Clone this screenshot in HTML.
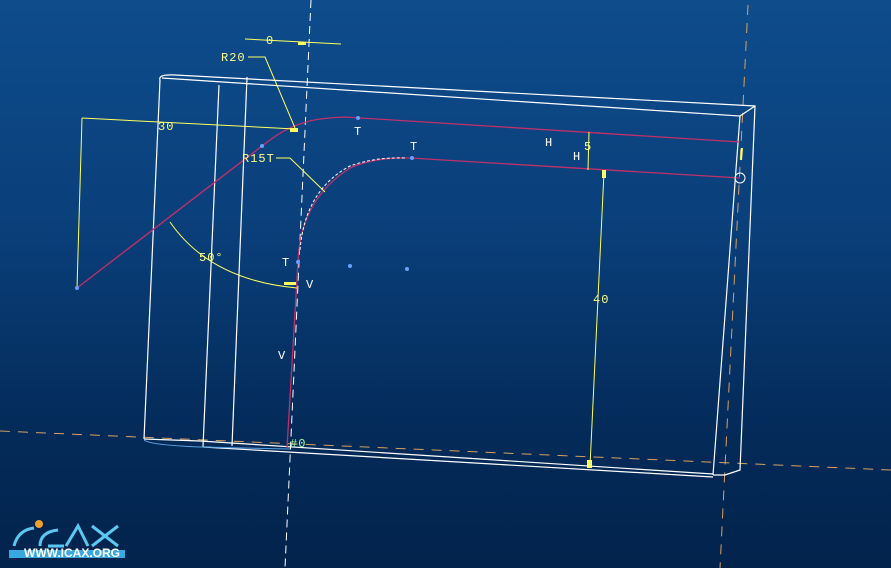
<!DOCTYPE html><html><head><meta charset="utf-8"><style>
html,body{margin:0;padding:0;width:891px;height:568px;overflow:hidden}
body{background:linear-gradient(180deg,#0e4c8c 0%,#0a3f7a 40%,#042b5a 75%,#02234c 100%)}
svg{position:absolute;left:0;top:0}
text{font-family:"Liberation Mono",monospace;font-size:12px;letter-spacing:1px}
</style></head><body>
<svg width="891" height="568" viewBox="0 0 891 568">
<g stroke="#d8a060" stroke-width="1" stroke-dasharray="10,8" fill="none">
<line x1="0" y1="431" x2="891" y2="470"/>
<line x1="748" y1="5" x2="720" y2="568"/>
</g>
<line x1="311" y1="0" x2="285" y2="568" stroke="#ffffff" stroke-width="1" stroke-dasharray="8,5"/>
<g stroke="#ffffff" stroke-width="1.2" fill="none">
<path d="M160,80 Q158,74 175,75 L755,106 L740,470 L725,475 L713,475"/>
<path d="M162,78 L740,116 L713,475"/>
<path d="M740,116 L755,106"/>
<line x1="160" y1="80" x2="144" y2="439"/>
<line x1="219" y1="85" x2="203" y2="447"/>
<line x1="247" y1="77" x2="232" y2="446"/>
<path d="M144,439 L200,441 L713,474"/>
<path d="M203,447 L713,477"/>
</g>
<path d="M144,440 Q150,445 200,447 L290,449" stroke="#5aa0e0" stroke-width="1" fill="none"/>
<g stroke="#c0306a" stroke-width="1.3" fill="none">
<path d="M77,288 L262,146 Q285,128 300,124 Q315,118 345,117 L740,142"/>
<path d="M287,448 L298,262 Q300,200 350,168 Q375,157 410,158 L740,178"/>
</g>
<path d="M300,250 Q305,190 350,166 Q375,157 405,158" stroke="#ffffff" stroke-width="1" stroke-dasharray="3,2" fill="none"/>
<g stroke="#ffff60" stroke-width="1" fill="none">
<line x1="82" y1="118" x2="295" y2="129"/>
<line x1="82" y1="118" x2="77" y2="288"/>
<line x1="245" y1="39" x2="341" y2="44"/>
<path d="M248,57 L265,57 L295,128"/>
<path d="M276,158 L290,158 L325,192"/>
<path d="M170,222 Q210,280 297,288"/>
<line x1="604" y1="172" x2="590" y2="466"/>
<line x1="589" y1="132" x2="588" y2="170"/>
<line x1="742" y1="148" x2="741" y2="160" stroke-width="2"/>
</g>
<circle cx="740" cy="178" r="5" stroke="#fff" fill="none"/>
<g fill="#ffff60" stroke="none">
<rect x="290" y="128" width="8" height="4"/><rect x="298" y="42" width="8" height="3"/><rect x="284" y="282" width="12" height="3"/>
<rect x="587" y="460" width="5" height="8"/><rect x="602" y="170" width="4" height="8"/>
</g>
<g fill="#6aa0ff"><circle cx="262" cy="146" r="2"/><circle cx="358" cy="118" r="2"/><circle cx="412" cy="158" r="2"/><circle cx="298" cy="262" r="2"/><circle cx="350" cy="266" r="2"/><circle cx="407" cy="269" r="2"/><circle cx="77" cy="288" r="2"/></g>
<g fill="#ffff80">
<text x="221" y="61">R20</text><text x="266" y="44">0</text><text x="158" y="130">30</text>
<text x="242" y="162">R15T</text><text x="199" y="261">50°</text><text x="584" y="150">5</text><text x="593" y="303">40</text>
</g>
<g fill="#ffffff">
<text x="354" y="135">T</text><text x="410" y="150">T</text><text x="282" y="266">T</text>
<text x="306" y="288">V</text><text x="278" y="359">V</text><text x="545" y="146">H</text><text x="573" y="160">H</text>
</g>
<text x="290" y="447" fill="#a0ffa0" font-size="10">#0</text>
<g>
<circle cx="39" cy="524" r="4" fill="#f0a030"/>
<path d="M14,546 Q18,530 34,528 M40,546 Q40,532 58,530 M48,546 L64,546 M66,546 L78,526 L88,546 M92,526 L118,546 M118,526 L92,546" stroke="#5ac8f0" stroke-width="3" fill="none"/>
<rect x="9" y="550" width="116" height="8" fill="#3aa8e0"/>
<text x="24" y="557" fill="#ffffff" font-size="7" font-weight="bold" style="font-family:'Liberation Sans',sans-serif;letter-spacing:0">WWW.ICAX.ORG</text>
</g>
</svg>
</body></html>
